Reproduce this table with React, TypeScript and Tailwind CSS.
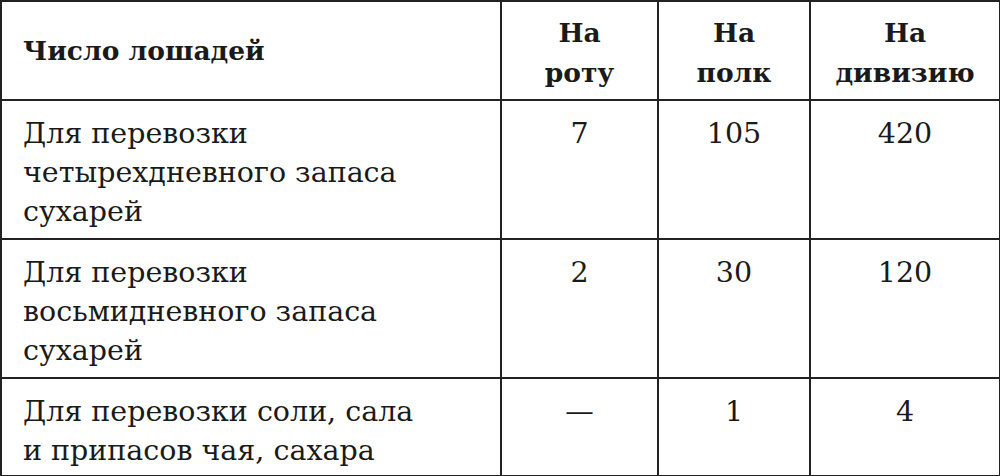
import React from 'react';

const rows = [
  { label: ['Для перевозки', 'четырехдневного запаса', 'сухарей'], rota: '7', polk: '105', div: '420' },
  { label: ['Для перевозки', 'восьмидневного запаса', 'сухарей'], rota: '2', polk: '30', div: '120' },
  { label: ['Для перевозки соли, сала', 'и припасов чая, сахара'], rota: '—', polk: '1', div: '4' },
];

const App: React.FC = () => {
  return (
    <div className="w-[1000px] h-[476px] bg-white text-[#1a1a1a]" style={{ fontFamily: '"DejaVu Serif", "Liberation Serif", serif' }}>
      <table className="w-[999px] table-fixed border-collapse border-2 border-[#222]">
        <colgroup>
          <col className="w-[500px]" />
          <col className="w-[157px]" />
          <col className="w-[152px]" />
          <col className="w-[190px]" />
        </colgroup>
        <thead>
          <tr className="h-[99px]">
            <th className="border-2 border-[#222] text-left align-middle pl-[21px] text-[26.5px] font-bold">Число лошадей</th>
            <th className="border-2 border-[#222] text-center align-middle pt-[4px] text-[26.5px] font-bold leading-[40px]">На<br />роту</th>
            <th className="border-2 border-[#222] text-center align-middle pt-[4px] text-[26.5px] font-bold leading-[40px]">На<br />полк</th>
            <th className="border-2 border-[#222] text-center align-middle pt-[4px] text-[26.5px] font-bold leading-[40px]">На<br />дивизию</th>
          </tr>
        </thead>
        <tbody>
          {rows.map((r, i) => (
            <tr key={i} className={i === 2 ? 'h-[98px]' : 'h-[139px]'}>
              <td className="border-2 border-[#222] align-top pl-[21px] pt-[13px] text-[28.5px] leading-[39px]">
                {r.label.map((l, j) => (
                  <div key={j}>{l}</div>
                ))}
              </td>
              <td className="border-2 border-[#222] align-top text-center pt-[13px] text-[28.5px] leading-[39px]">{r.rota}</td>
              <td className="border-2 border-[#222] align-top text-center pt-[13px] text-[28.5px] leading-[39px]">{r.polk}</td>
              <td className="border-2 border-[#222] align-top text-center pt-[13px] text-[28.5px] leading-[39px]">{r.div}</td>
            </tr>
          ))}
        </tbody>
      </table>
    </div>
  );
};

export default App;
